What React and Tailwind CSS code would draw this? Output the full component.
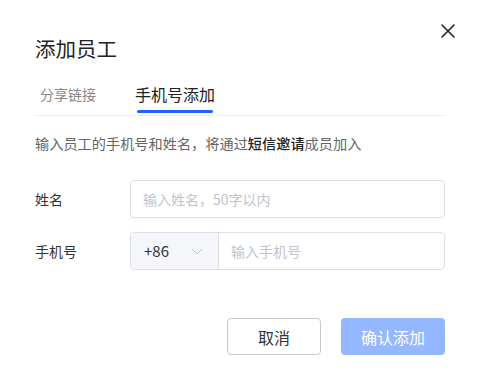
import React, { useState } from 'react';

const font = { fontFamily: '"Noto Sans CJK SC", "Noto Sans", sans-serif' };

function CloseIcon() {
  return (
    <svg width="14" height="14" viewBox="0 0 14 14" fill="none">
      <path d="M1 1L13 13M13 1L1 13" stroke="#222" strokeWidth="1.6" strokeLinecap="round" />
    </svg>
  );
}

function Chevron() {
  return (
    <svg width="12" height="7" viewBox="0 0 12 7" fill="none">
      <path d="M1 1L6 6L11 1" stroke="#c0c4cc" strokeWidth="1" />
    </svg>
  );
}

export default function App() {
  const [tab, setTab] = useState('phone');

  return (
    <div className="relative w-[480px] h-[380px] bg-white px-[35px] pt-[34px]" style={font}>
      <button className="absolute right-[25px] top-[24px] w-[14px] h-[14px] flex items-center justify-center">
        <CloseIcon />
      </button>

      <h1 className="text-[20.5px] leading-[28px] text-[#222]">添加员工</h1>

      <div className="mt-[20px] flex items-start border-b border-[#ececec]">
        <button
          onClick={() => setTab('link')}
          className="ml-[5px] flex flex-col items-center pb-[2px]"
        >
          <span className={`text-[14px] leading-[24px] ${tab === 'link' ? 'text-[#222]' : 'text-[#888]'}`}>分享链接</span>
          <span className={`mt-[4px] h-[3px] w-[56px] rounded-full ${tab === 'link' ? 'bg-[#1a66ff]' : 'bg-transparent'}`} />
        </button>
        <button
          onClick={() => setTab('phone')}
          className="ml-[39px] flex flex-col items-center pb-[2px]"
        >
          <span className={`text-[16px] leading-[24px] ${tab === 'phone' ? 'text-[#222]' : 'text-[#888]'}`}>手机号添加</span>
          <span className={`mt-[4px] h-[3px] w-[76px] rounded-full ${tab === 'phone' ? 'bg-[#1a66ff]' : 'bg-transparent'}`} />
        </button>
      </div>

      <p className="mt-[16px] text-[14.2px] leading-[22px] text-[#666]">
        输入员工的手机号和姓名，将通过<span className="font-medium text-[#222]">短信邀请</span>成员加入
      </p>

      <div className="mt-[26px] flex items-center">
        <label className="w-[95px] text-[14px] text-[#333]">姓名</label>
        <input
          className="flex-1 h-[38px] rounded-[4px] border border-[#dcdfe6] px-[12px] text-[14px] text-[#333] placeholder:text-[#c0c4cc] outline-none"
          placeholder="输入姓名，50字以内"
        />
      </div>

      <div className="mt-[14px] flex items-center">
        <label className="w-[95px] text-[14px] text-[#333]">手机号</label>
        <div className="flex-1 h-[38px] flex rounded-[4px] border border-[#dcdfe6] overflow-hidden">
          <div className="w-[88px] flex items-center justify-between bg-[#f5f6f9] border-r border-[#dcdfe6] pl-[13px] pr-[15px]">
            <span className="text-[15px] text-[#333]">+86</span>
            <Chevron />
          </div>
          <input
            className="flex-1 px-[12px] text-[14px] text-[#333] placeholder:text-[#c0c4cc] outline-none"
            placeholder="输入手机号"
          />
        </div>
      </div>

      <div className="mt-[48px] flex justify-end gap-[20px]">
        <button className="w-[94px] h-[37px] rounded-[4px] border border-[#c8c8c8] text-[16px] text-[#333]">取消</button>
        <button className="w-[104px] h-[37px] rounded-[4px] bg-[#94b8ff] text-[16px] text-white">确认添加</button>
      </div>
    </div>
  );
}
